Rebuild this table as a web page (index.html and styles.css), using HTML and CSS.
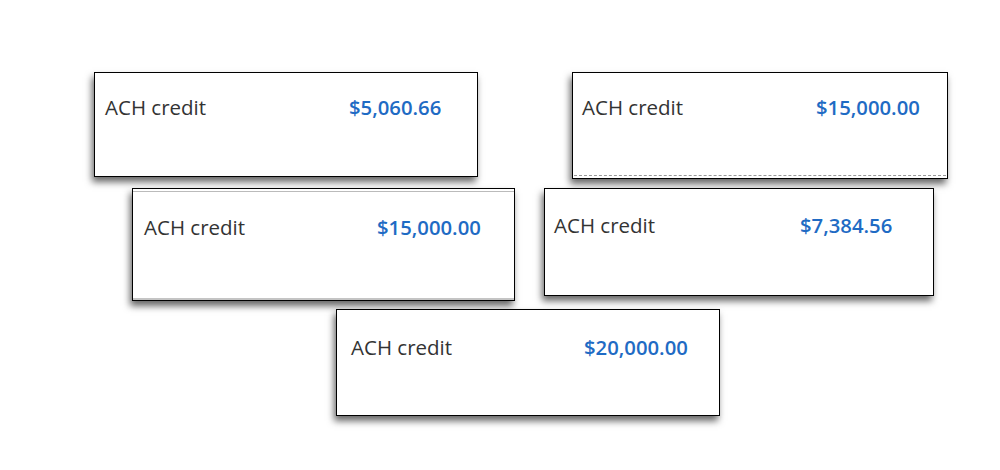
FILE: index.html
```html
<!DOCTYPE html>
<html lang="en">
<head>
<meta charset="utf-8">
<title>ACH credits</title>
<link rel="stylesheet" href="styles.css">
</head>
<body>
<main class="canvas">
  <div class="card c1">
    <div class="row"><span class="label">ACH credit</span><span class="amount">$5,060.66</span></div>
  </div>
  <div class="card c2">
    <div class="row"><span class="label">ACH credit</span><span class="amount">$15,000.00</span></div>
    <div class="dash"></div>
  </div>
  <div class="card c3">
    <div class="topline"></div>
    <div class="row"><span class="label">ACH credit</span><span class="amount">$15,000.00</span></div>
    <div class="botline"></div>
  </div>
  <div class="card c4">
    <div class="row"><span class="label">ACH credit</span><span class="amount">$7,384.56</span></div>
  </div>
  <div class="card c5">
    <div class="row"><span class="label">ACH credit</span><span class="amount">$20,000.00</span></div>
  </div>
</main>
</body>
</html>
```
FILE: styles.css
```css
html, body {
  margin: 0;
  padding: 0;
  background: #fff;
}
.canvas {
  position: relative;
  width: 1000px;
  height: 470px;
  font-family: "Open Sans", "Liberation Sans", sans-serif;
}
.card {
  position: absolute;
  box-sizing: border-box;
  background: #fff;
  border: 1px solid #000;
  box-shadow: -2px 5px 7px rgba(0, 0, 0, 0.6);
}
.row {
  display: flex;
  align-items: baseline;
  line-height: 28px;
}
.label {
  font-size: 20.5px;
  color: #333;
  flex: none;
}
.amount {
  font-size: 20.3px;
  font-weight: 600;
  color: #1f6bc4;
  white-space: nowrap;
}
.dash {
  position: absolute;
  left: 1px;
  right: 1px;
  bottom: 2px;
  border-top: 1px dashed #999;
}
.topline {
  position: absolute;
  left: 0;
  right: 0;
  top: 2px;
  border-top: 1px solid #bbb;
}
.botline {
  position: absolute;
  left: 0;
  right: 0;
  bottom: 0;
  border-top: 2px solid #c4c4c4;
}
.c1 { left: 94px; top: 72px; width: 384px; height: 105px; }
.c1 .row { padding: 20px 0 0 10px; }
.c1 .label { width: 244px; }

.c2 { left: 572px; top: 72px; width: 376px; height: 107px; }
.c2 .row { padding: 20px 0 0 9px; }
.c2 .label { width: 234px; }

.c3 { left: 132px; top: 188px; width: 383px; height: 113px; }
.c3 .row { padding: 24px 0 0 11px; }
.c3 .label { width: 233px; }

.c4 { left: 544px; top: 188px; width: 390px; height: 108px; }
.c4 .row { padding: 22px 0 0 9px; }
.c4 .label { width: 246px; }

.c5 { left: 336px; top: 309px; width: 384px; height: 107px; }
.c5 .row { padding: 23px 0 0 14px; }
.c5 .label { width: 233px; }
```
